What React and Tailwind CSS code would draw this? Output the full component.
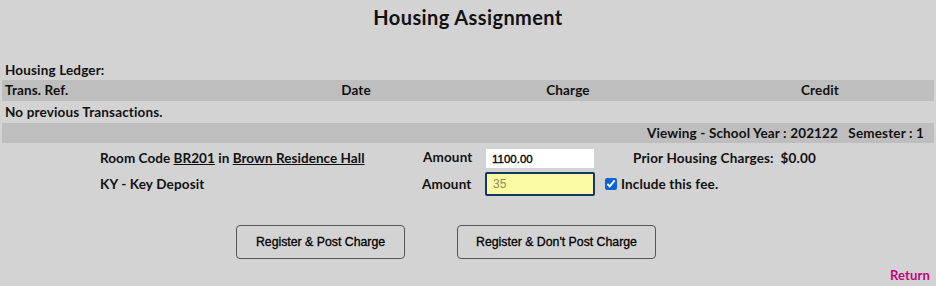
import React from "react";

export default function App() {
  return (
    <div className="w-[936px] h-[286px] bg-[#d3d3d3] text-[#111] font-['Lato',sans-serif] font-bold text-[13.5px] tracking-[0.15px] flex flex-col">
      <div className="h-[34px] flex items-center justify-center text-[20px] tracking-[0.4px]">Housing Assignment</div>
      <div className="h-[27px]" />
      <div className="h-[19px] flex items-center pl-[5px]">Housing Ledger:</div>
      <div className="h-[21px] mx-[2px] bg-[#bebebe] flex items-center">
        <div className="w-[282px] pl-[3px]">Trans. Ref.</div>
        <div className="w-[144px] text-center">Date</div>
        <div className="w-[280px] text-center">Charge</div>
        <div className="w-[224px] text-center">Credit</div>
      </div>
      <div className="h-[22px] flex items-center pl-[5px]">No previous Transactions.</div>
      <div className="h-[20px] mx-[2px] bg-[#bebebe] flex items-center justify-end pr-[10px] whitespace-pre">
        Viewing - School Year : 202122{"   "}Semester : 1
      </div>
      <div className="pt-[6px] flex flex-col gap-[4px]">
        <div className="flex items-center h-[19px]">
          <div className="w-[423px] pl-[100px] tracking-[0.05px]">
            Room Code <span className="underline">BR201</span> in <span className="underline">Brown Residence Hall</span>
          </div>
          <div className="w-[63px] self-start -mt-[2px]">Amount</div>
          <input
            readOnly
            value="1100.00"
            className="w-[108px] h-[19px] bg-white px-[6px] font-['Liberation_Sans',sans-serif] font-normal tracking-normal text-[11.5px] text-black [-webkit-text-stroke:0.35px_#000] outline-none"
          />
          <div className="ml-[39px] whitespace-pre">Prior Housing Charges:  $0.00</div>
        </div>
        <div className="flex items-center h-[24px]">
          <div className="w-[422px] pl-[100px]">KY - Key Deposit</div>
          <div className="w-[63px] self-start mt-[2px]">Amount</div>
          <input
            readOnly
            value="35"
            className="w-[110px] h-[24px] bg-[#fafaa5] border-2 border-[#1b3663] rounded-[2px] px-[6px] font-['Liberation_Sans',sans-serif] font-normal tracking-normal text-[12px] text-[#8c8c5a] outline-none"
          />
          <input type="checkbox" checked readOnly className="ml-[10px] w-[12px] h-[12px] accent-[#0b63d6]" />
          <div className="ml-[4px]">Include this fee.</div>
        </div>
      </div>
      <div className="mt-[29px] flex pl-[236px] gap-[52px]">
        <button className="w-[169px] h-[34px] border border-[#555] rounded-[4px] bg-transparent font-['Liberation_Sans',sans-serif] font-normal tracking-normal text-[12.3px] text-black [-webkit-text-stroke:0.3px_#000]">
          Register &amp; Post Charge
        </button>
        <button className="w-[199px] h-[34px] border border-[#555] rounded-[4px] bg-transparent font-['Liberation_Sans',sans-serif] font-normal tracking-normal text-[12.3px] text-black [-webkit-text-stroke:0.3px_#000]">
          Register &amp; Don't Post Charge
        </button>
      </div>
      <div className="mt-[7px] flex justify-end pr-[6px] text-[#c0067c] text-[13px]">Return</div>
    </div>
  );
}
